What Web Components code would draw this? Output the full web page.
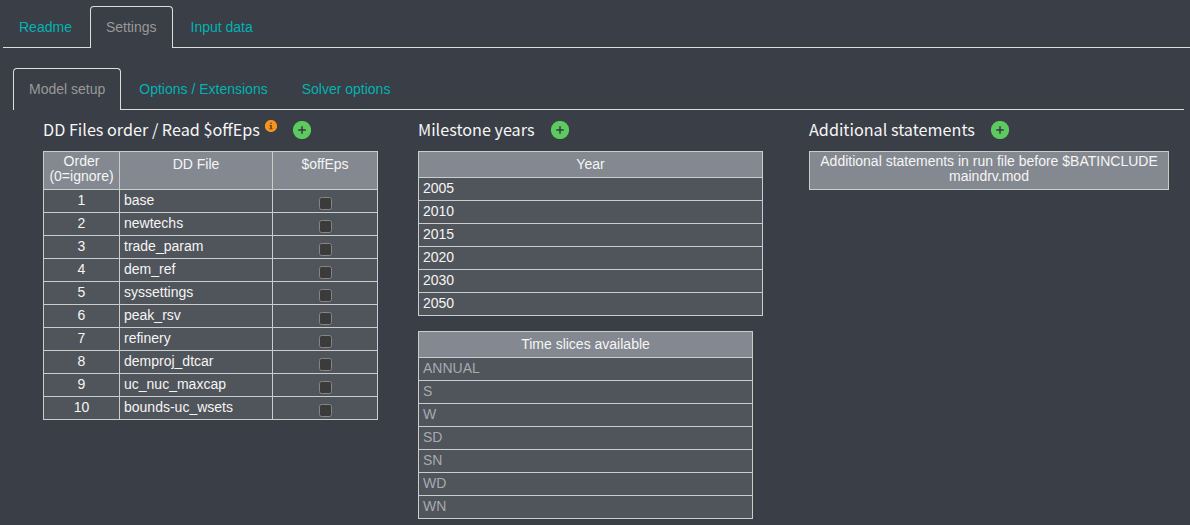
<!DOCTYPE html>
<html lang="en">
<head>
<meta charset="utf-8">
<title>Model setup</title>
<style>
html,body{margin:0;height:525px;overflow:hidden;background:#3a3e46;color:#f5f5f5;font:14px/15px "Liberation Sans",Arial,sans-serif}
</style>
</head>
<body>
<model-app></model-app>
<script>
const define = (name, html) => customElements.define(name, class extends HTMLElement {
  connectedCallback() {
    if (this.shadowRoot) return;
    const root = this.attachShadow({ mode: 'open' });
    root.innerHTML = typeof html === 'function' ? html(this) : html;
  }
});

define('tab-item', `<style>
:host{display:block;box-sizing:border-box;height:42px;padding:10px 15px 0;border:1px solid transparent;border-bottom:0;border-radius:4px 4px 0 0;color:#00b3b3;font-size:14px;line-height:20px;white-space:nowrap;margin-right:2px}
:host([active]){color:#999;border-color:#ddd;background:#3a3e46}
</style><slot></slot>`);

define('tab-bar', `<style>
:host{display:flex;box-sizing:border-box;height:42px;background:linear-gradient(#ddd,#ddd) 0 100%/100% 1px no-repeat}
</style><slot></slot>`);

define('add-button', `<style>
:host{display:block;width:18px;height:18px}svg{display:block}
</style><svg width="18" height="18" viewBox="0 0 18 18"><circle cx="9" cy="9" r="9.1" fill="#5dca60"/><path d="M9 5.2v7.6M5.2 9h7.6" stroke="#343b40" stroke-width="1.5"/></svg>`);

define('info-badge', `<style>
:host{display:block;width:12px;height:12px}svg{display:block}
</style><svg width="12" height="12" viewBox="0 0 12 12"><circle cx="6" cy="6" r="6.1" fill="#f7941d"/><path d="M5.2 2.7h1.6v1.4H5.2zM4.5 5h2.3v3.2h.8v1H4.4v-1h.8V6h-.7z" fill="#654326"/></svg>`);

define('panel-title', `<style>
:host{display:flex;height:41px;white-space:nowrap}
.t{font:16.2px/24px "Noto Sans CJK SC","Noto Sans",sans-serif;margin-top:7px}
add-button{margin:11px 0 0 16px}
</style><span class="t"><slot></slot></span><slot name="badge"></slot><add-button></add-button>`);

define('check-box', `<style>
:host{display:block;box-sizing:border-box;width:13px;height:13px;border:1px solid #858585;border-radius:2.5px;background:#3b3b3b}
</style>`);

define('data-grid', el => {
  const heads = el.getAttribute('heads').split('|');
  const rows = el.getAttribute('rows') ? el.getAttribute('rows').split(',') : [];
  const files = el.hasAttribute('files');
  const body = rows.map((r, i) => files
    ? `<div class="c mid">${i + 1}</div><div class="c">${r}</div><div class="c box"><check-box></check-box></div>`
    : `<div class="c">${r}</div>`).join('');
  return `<style>
:host{display:grid;box-sizing:border-box;width:var(--w);grid-template-columns:var(--cols,1fr);grid-template-rows:var(--head,26px);grid-auto-rows:23px;border:solid #ccc;border-width:1px 0 0 1px;color:#f5f5f5}
div{box-sizing:border-box;border:solid #ccc;border-width:0 1px 1px 0;white-space:nowrap}
.h{background:#848991;text-align:center;padding-top:5px}
.h.two{padding-top:2px}
.c{background:#50545b;padding:3px 4px 0}
.mid{text-align:center}
.box{display:flex;justify-content:center;padding-top:7px}
:host([readonly]) .c{color:#a6abb0}
</style>${heads.map(h => `<div class="h${h.includes('/') ? ' two' : ''}">${h.replace('/', '<br>')}</div>`).join('')}${body}`;
});

define('model-app', `<style>
:host{display:block;width:1190px;height:525px;padding-top:6px;box-sizing:border-box}
.main{margin-left:3px}
.sub{margin:20px 6px 0 13px}
.cols{display:grid;grid-template-columns:375px 391px 360px;padding-left:43px}
.slices{margin-top:15px}
info-badge{margin:10px 0 0 5px}
</style>
<tab-bar class="main"><tab-item>Readme</tab-item><tab-item active>Settings</tab-item><tab-item>Input data</tab-item></tab-bar>
<tab-bar class="sub"><tab-item active>Model setup</tab-item><tab-item>Options / Extensions</tab-item><tab-item>Solver options</tab-item></tab-bar>
<div class="cols">
<section><panel-title>DD Files order / Read $offEps<info-badge slot="badge"></info-badge></panel-title>
<data-grid files style="--w:335px;--cols:76px 153px 105px;--head:38px" heads="Order/(0=ignore)|DD File|$offEps" rows="base,newtechs,trade_param,dem_ref,syssettings,peak_rsv,refinery,demproj_dtcar,uc_nuc_maxcap,bounds-uc_wsets"></data-grid></section>
<section><panel-title>Milestone years</panel-title>
<data-grid style="--w:345px" heads="Year" rows="2005,2010,2015,2020,2030,2050"></data-grid>
<data-grid class="slices" readonly style="--w:335px" heads="Time slices available" rows="ANNUAL,S,W,SD,SN,WD,WN"></data-grid></section>
<section><panel-title>Additional statements</panel-title>
<data-grid style="--w:360px;--head:38px" heads="Additional statements in run file before $BATINCLUDE/maindrv.mod"></data-grid></section>
</div>`);
</script>
</body>
</html>
